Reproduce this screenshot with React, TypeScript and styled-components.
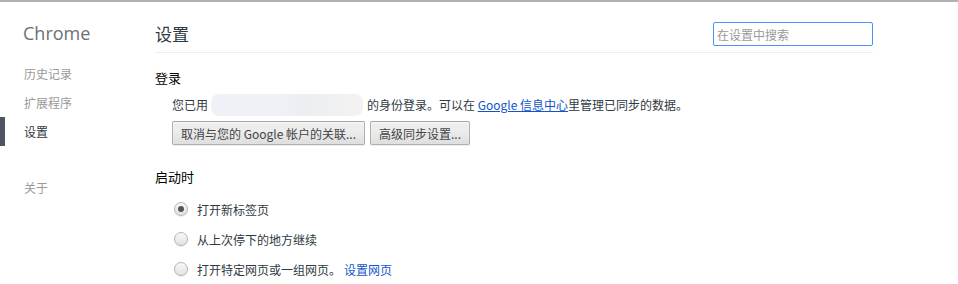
import styled, { createGlobalStyle } from "styled-components";

const GlobalStyle = createGlobalStyle`
  html, body {
    margin: 0;
    padding: 0;
    background: #fff;
  }
  body {
    font-family: "Noto Sans CJK SC", "Noto Sans", "Liberation Sans", sans-serif;
    color: #303942;
  }
`;

const navItems = ["历史记录", "扩展程序", "设置"];

const startupOptions = [
  { label: "打开新标签页", checked: true },
  { label: "从上次停下的地方继续", checked: false },
  { label: "打开特定网页或一组网页。", checked: false, link: "设置网页" },
];

const App = () => {
  return (
    <Page>
      <GlobalStyle />
      <Sidebar>
        <Brand>Chrome</Brand>
        <Nav>
          {navItems.map((item) => (
            <NavItem key={item} $active={item === "设置"}>
              {item}
            </NavItem>
          ))}
        </Nav>
        <NavItem $spaced>关于</NavItem>
      </Sidebar>

      <Main>
        <Header>
          <Title>设置</Title>
          <Search placeholder="在设置中搜索" />
        </Header>

        <Section>
          <SectionTitle>登录</SectionTitle>
          <SectionBody>
            <Line>
              您已用
              <Blur />
              的身份登录。可以在 <Link className="underline">Google 信息中心</Link>
              里管理已同步的数据。
            </Line>
            <Buttons>
              <Button>取消与您的 Google 帐户的关联...</Button>
              <Button>高级同步设置...</Button>
            </Buttons>
          </SectionBody>
        </Section>

        <Section $gap="20px">
          <SectionTitle>启动时</SectionTitle>
          <RadioList>
            {startupOptions.map((opt) => (
              <RadioRow key={opt.label}>
                <Radio $checked={opt.checked} />
                <span>
                  {opt.label}
                  {opt.link && <Link className="after">{opt.link}</Link>}
                </span>
              </RadioRow>
            ))}
          </RadioList>
        </Section>
      </Main>
    </Page>
  );
};

export default App;

const Page = styled.div`
  width: 958px;
  height: 284px;
  box-sizing: border-box;
  border-top: 2px solid #b2b2b2;
  display: flex;
  overflow: hidden;
`;

const Sidebar = styled.div`
  width: 155px;
  flex-shrink: 0;
  display: flex;
  flex-direction: column;
`;

const Brand = styled.div`
  font-family: "Open Sans", "Noto Sans", sans-serif;
  font-size: 18px;
  color: #6b7076;
  padding: 16px 0 0 23px;
  height: 31px;
  line-height: 31px;
  margin-bottom: 10px;
`;

const Nav = styled.div`
  display: flex;
  flex-direction: column;
`;

const NavItem = styled.div<{ $active?: boolean; $spaced?: boolean }>`
  height: 29px;
  line-height: 29px;
  font-size: 12px;
  color: ${(p) => (p.$active ? "#303942" : "#999")};
  border-left: 5px solid ${(p) => (p.$active ? "#4e5561" : "transparent")};
  padding-left: 19px;
  margin-top: ${(p) => (p.$spaced ? "27px" : "0")};
`;

const Main = styled.div`
  width: 718px;
  display: flex;
  flex-direction: column;
`;

const Header = styled.div`
  height: 52px;
  box-sizing: border-box;
  border-bottom: 1px solid #eee;
  display: flex;
  align-items: center;
  justify-content: space-between;
  padding-top: 14px;
`;

const Title = styled.h1`
  margin: -2px 0 0;
  font-size: 17px;
  font-weight: normal;
  color: #303942;
`;

const Search = styled.input`
  width: 160px;
  height: 24px;
  box-sizing: border-box;
  border: 1px solid #4d90fe;
  border-radius: 2px;
  outline: none;
  padding: 0 3px;
  font-size: 12px;
  font-family: inherit;

  &::placeholder {
    color: #999;
  }
`;

const Section = styled.div<{ $gap?: string }>`
  padding-top: ${(p) => p.$gap ?? "13px"};
`;

const SectionTitle = styled.h3`
  margin: 0;
  font-size: 13px;
  font-weight: normal;
  color: #000;
  height: 24px;
  line-height: 24px;
`;

const SectionBody = styled.div`
  padding-left: 17px;
`;

const Line = styled.div`
  font-size: 12px;
  height: 26px;
  line-height: 26px;
  margin-top: 2px;
  color: #303942;
  display: flex;
  align-items: center;
  white-space: pre;
`;

const Blur = styled.span`
  display: inline-block;
  width: 152px;
  height: 22px;
  border-radius: 8px;
  background: linear-gradient(90deg, #eef1f5 0%, #eef2f6 45%, #eceef2 60%, #f3f2f0 100%);
  margin: 0 4px 0 3px;
`;

const Link = styled.a`
  color: #1155cc;
  cursor: pointer;

  &.underline {
    text-decoration: underline;
  }

  &.after {
    margin-left: 3px;
  }
`;

const Buttons = styled.div`
  display: flex;
  gap: 5px;
  margin-top: 3px;
`;

const Button = styled.button`
  height: 24px;
  padding: 0 8px;
  font-size: 12px;
  font-family: inherit;
  color: #444;
  border: 1px solid rgba(0, 0, 0, 0.25);
  border-radius: 2px;
  background: linear-gradient(#ededed, #ededed 38%, #dedede);
  box-shadow: 0 1px 0 rgba(0, 0, 0, 0.08), inset 0 1px 2px rgba(255, 255, 255, 0.75);
`;

const RadioList = styled.div`
  padding-left: 19px;
  padding-top: 5px;
  display: flex;
  flex-direction: column;
`;

const RadioRow = styled.label`
  height: 30px;
  display: flex;
  align-items: center;
  gap: 9px;
  font-size: 12px;
  color: #303942;
`;

const Radio = styled.span<{ $checked?: boolean }>`
  width: 14px;
  height: 14px;
  box-sizing: border-box;
  border-radius: 50%;
  border: 1px solid #b5b5b5;
  background: linear-gradient(#f8f8f8, #e2e2e2);
  box-shadow: 0 1px 1px rgba(0, 0, 0, 0.08);
  display: flex;
  align-items: center;
  justify-content: center;

  &::after {
    content: "";
    width: 6px;
    height: 6px;
    border-radius: 50%;
    background: #555;
    display: ${(p) => (p.$checked ? "block" : "none")};
  }
`;
